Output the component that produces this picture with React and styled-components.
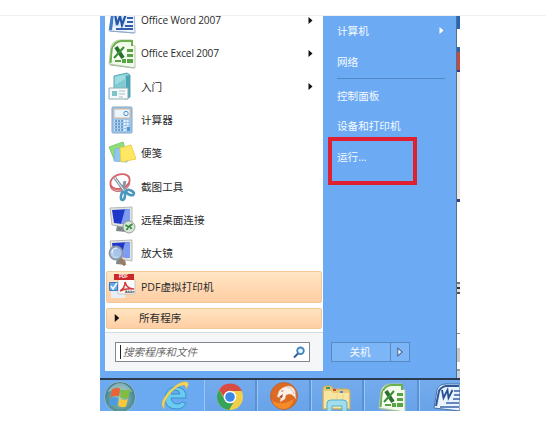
import React from 'react';
import styled, { createGlobalStyle } from 'styled-components';

const GlobalStyle = createGlobalStyle`
  * { box-sizing: border-box; }
  body { margin: 0; background: #fff; }
`;

const Page = styled.main`
  width: 546px;
  height: 425px;
  overflow: hidden;
  padding-top: 15px;
  font-family: 'Open Sans', 'Noto Sans CJK SC', sans-serif;
  font-size: 10.6px;
  color: #2a2a2a;
`;
const Desktop = styled.div`
  border-top: 1px solid #f0f0f0;
  padding-left: 100px;
`;
const Upper = styled.div`
  display: flex;
  width: 360px;
  height: 362px;
`;
const StartMenu = styled.section`
  display: flex;
  width: 357px;
  height: 362px;
  padding-left: 5px;
  background: #6cabf4;
`;
const Left = styled.div`
  width: 218px;
  height: 355px;
  background: #fff;
  display: flex;
  flex-direction: column;
`;
const Programs = styled.div`
  height: 287px;
  display: flex;
  flex-direction: column;
  justify-content: flex-end;
`;
const Program = styled.div`
  flex: none;
  display: flex;
  align-items: ${p => (p.$first ? 'flex-start' : 'center')};
  height: ${p => (p.$active ? 32 : p.$first ? 20.9 : 33.3)}px;
  margin: ${p => (p.$active ? 1 : 0)}px 0 0 1px;
  width: 216px;
  padding: 0 7px 0 1px;
  gap: 5px;
  border-radius: 2px;
  border: solid ${p => (p.$active ? '#f3c898' : 'transparent')};
  border-width: ${p => (p.$first ? 0 : 1)}px 1px 1px;
  background: ${p => (p.$active ? 'linear-gradient(#ffe6c4, #ffcda3)' : 'none')};
  svg { flex: none; }
`;
const Label = styled.span`
  flex: 1;
  line-height: ${p => (p.$latin ? 9 : 16)}px;
  white-space: nowrap;
  font-size: ${p => (p.$latin ? 10.1 : 10.6)}px;
  letter-spacing: ${p => (p.$latin ? -0.12 : 0)}px;
`;
const AllPrograms = styled.div`
  flex: none;
  display: flex;
  align-items: center;
  gap: 18px;
  height: 21px;
  margin: 5px 0 3px 1px;
  width: 216px;
  padding: 0 0 2px 6px;
  border: 1px solid #f3c898;
  border-radius: 2px;
  background: linear-gradient(#ffe4bf, #ffcea5);
`;
const SearchArea = styled.div`
  flex: 1;
  padding: 9px 13px 0 10px;
  border-top: 1px solid #d5dde5;
  background: #f4f6f8;
`;
const SearchBox = styled.div`
  display: flex;
  align-items: center;
  height: 20px;
  padding: 0 4px;
  border: 1px solid #7f8790;
  background: #fff;
  color: #6a6a6a;
  font-style: italic;
`;
const Caret = styled.i`
  width: 1px;
  height: 14px;
  margin-right: 2px;
  background: #222;
`;
const Right = styled.div`
  width: 134px;
  border-right: 1px solid #4f7195;
  padding: 0 11px 0 8px;
  display: flex;
  flex-direction: column;
  color: #f6faff;
`;
const Place = styled.div`
  position: relative;
  flex: none;
  display: flex;
  align-items: center;
  justify-content: space-between;
  height: 30.5px;
  padding: 0 0 1px 6px;
`;
const Rule = styled.div`
  height: 1px;
  margin: 1px 0 1.5px 6px;
  background: #5088ca;
`;
const Highlight = styled.div`
  position: absolute;
  left: -3px;
  top: -5px;
  width: 89px;
  height: 48px;
  border: 4px solid #df2030;
`;
const Shutdown = styled.div`
  display: grid;
  grid-template-columns: 58px 1fr;
  width: 79px;
  height: 20px;
  margin-top: auto;
  margin-bottom: 16px;
  border: 1px solid #5689c2;
  background: #7db6f6;
`;
const ShutdownPart = styled.div`
  display: flex;
  align-items: center;
  justify-content: center;
  padding: 0 ${p => (p.$split ? 0 : 2)}px 1px 0;
  border-left: ${p => (p.$split ? '1px solid #5689c2' : 'none')};
`;
const Backdrop = styled.div`
  width: 3px;
  display: flex;
  flex-direction: column;
`;
const Slice = styled.div`
  height: ${p => p.$h}px;
  background: ${p => p.$c};
`;
const Taskbar = styled.nav`
  display: flex;
  width: 360px;
  height: 33px;
  border-top: 2px solid #2c3b50;
  background: #6ba9f1;
  overflow: hidden;
`;
const Task = styled.div`
  flex: none;
  width: ${p => p.$w}px;
  padding: ${p => p.$top || 2}px 0 0 ${p => p.$pad}px;
  border-left: ${p => (p.$open ? '1px solid #98c6f8' : 'none')};
  border-right: ${p => (p.$open ? '2px solid #5a91d3' : 'none')};
  background: ${p => (p.$open ? 'linear-gradient(#73abed, #69a3e8)' : 'none')};
  svg { display: block; }
`;

const Arrow = ({ color = '#111', size = 7, outline = 'none' }) => (
  <svg width={size} height={size + 2} viewBox="0 0 7 9">
    <path d="M1.5 1 5.5 4.500 1.5 8Z" fill={color} stroke={outline} />
  </svg>
);

const WordIcon = () => (
  <svg width="28" height="19" viewBox="0 11 28 19">
    <path d="M1 26 4 6Q6 1 12 1h14l1 27Z" fill="#eef5ff" stroke="#9db5d6" />
    <path d="M2.500 25 5 7q1-4 6-5" fill="none" stroke="#3f78c4" strokeWidth="3" />
    <path d="M6 6h12v16H5Z" fill="#dbe8fa" />
    <path d="m7 9 2 11 3-9 2 9 4-11" fill="none" stroke="#2556a8" strokeWidth="2.200" />
    <path d="M19 13h6M19 17h6M17 21h8M8 24h17" stroke="#315fa9" strokeWidth="1.800" />
    <path d="m2 26 24 2" stroke="#93a6c4" />
  </svg>
);
const ExcelIcon = () => (
  <svg width="28" height="30" viewBox="0 0 28 30">
    <path d="M1 25 3 8Q5 1 13 1h11v5l3 1v22Z" fill="#f1f9ea" stroke="#b0cba5" />
    <path d="M2.500 24 4 10Q6 3 13 2h11v5" fill="none" stroke="#6bb04c" strokeWidth="2" />
    <path d="M5 8h13v13H4Z" fill="#fbfff8" />
    <path d="m8 8 7 11" stroke="#28702c" strokeWidth="4" />
    <path d="m16 8-10 11" stroke="#3c8f36" strokeWidth="2.200" />
    <path d="M19 10h6v3h-6Zm0 5h6v3h-6ZM14 20h4v4h-4Zm5 0h6v4h-6ZM7 21h6v2H7Z" fill="#5aa345" />
    <path d="m2 26 24 3" stroke="#a8b7a4" />
  </svg>
);
const StartedIcon = () => (
  <svg width="28" height="30" viewBox="0 0 28 30">
    <path d="m6 4 13-3 3 2v22l-4 2-12-4Z" fill="#8ccdd5" stroke="#5aa9b5" />
    <path d="m18 4 4-1v22l-4 2Z" fill="#4ba5b4" />
    <path d="m7 5 10-2v20H7Z" fill="#9edce2" />
    <path d="m7 13 10-6v16H7Z" fill="#63b7c4" opacity=".5" />
    <path d="M1 16h19v11H1Z" fill="#f5fbfc" stroke="#8daeb5" />
    <path d="M4 19h5v5H4Z" fill="#81c4c7" />
    <path d="M11 19h6M11 22h6M11 25h4" stroke="#a9bdc0" />
  </svg>
);
const CalcIcon = () => (
  <svg width="28" height="30" viewBox="0 0 28 30">
    <rect x="4" y="2" width="20" height="26" rx="1" fill="#9fc5e8" stroke="#82a9cd" />
    <path d="M6 4h16v9H6Z" fill="#e9f5ff" stroke="#dcb58f" />
    <circle cx="18" cy="8.500" r="2.200" fill="none" stroke="#4f8fc9" />
    <path d="M6.500 16h15M6.500 19h15M6.500 22h15M6.500 25h15" stroke="#e4f2fd" strokeWidth="2" strokeDasharray="2 1" />
    <path d="M7 16h8M7 19h8M7 22h8M7 25h8" stroke="#4b87c0" strokeWidth="1.500" strokeDasharray="2 1" />
    <path d="M19 22h3v4h-3Z" fill="#4f96d5" />
  </svg>
);
const NotesIcon = () => (
  <svg width="28" height="30" viewBox="0 0 28 30">
    <path d="m1 9 14-5 4 13-13 4Z" fill="#8edc7a" stroke="#7dcb70" />
    <path d="m7 11 13-2-1 15-13-1Z" fill="#91c6ef" stroke="#84b7dd" />
    <path d="m12 10 11-3 5 14-15 3Z" fill="#ffe663" stroke="#e9d252" />
  </svg>
);
const SnipIcon = () => (
  <svg width="28" height="30" viewBox="0 0 28 30">
    <ellipse cx="12" cy="12" rx="10" ry="7" fill="#e9b1b3" stroke="#c66a70" transform="rotate(-20 12 12)" />
    <ellipse cx="12" cy="9.500" rx="10" ry="7" fill="#fff" stroke="#d56169" strokeWidth="1.800" transform="rotate(-20 12 9.500)" />
    <path d="m7 6 11 15M17 9l-3 12" stroke="#8398a5" strokeWidth="3" />
    <path d="m7 6 10 14" stroke="#e8f0f4" />
    <ellipse cx="15" cy="24" rx="2" ry="4" fill="none" stroke="#4b97bd" strokeWidth="2.600" transform="rotate(10 15 24)" />
    <ellipse cx="22" cy="20.500" rx="4" ry="2.200" fill="none" stroke="#4b97bd" strokeWidth="2.600" transform="rotate(25 22 20.500)" />
  </svg>
);
const Monitor = ({ remote = false }) => (
  <svg width="28" height="30" viewBox="0 0 28 30">
    <path d="m9 20 8 1 1 6-10-1Z" fill="#7e8789" />
    <path d="m2 3 22-1v21L4 20Z" fill="#e2e6e5" stroke="#b4b9b7" />
    <path d="m4 5 18-1v16L6 18Z" fill="#2038c9" />
    <path d="m17 4.300 5-.3v16l-9-1Z" fill="#7f9cf0" />
    {remote ? (
      <g>
        <circle cx="21" cy="22" r="6" fill="#d8e5d8" stroke="#91a392" />
        <path d="m17.500 20 3 2-2 3M24.500 19l-3 2 2 3" fill="none" stroke="#328a39" strokeWidth="1.600" />
      </g>
    ) : (
      <g>
        <path d="m12 20 4 6" stroke="#a07a5a" strokeWidth="3.500" strokeLinecap="round" />
        <circle cx="8" cy="15" r="6.500" fill="#b6d3ed" fillOpacity=".9" stroke="#8997a6" strokeWidth="1.800" />
        <path d="M4 15q0-5 5-5" fill="none" stroke="#f0faff" />
      </g>
    )}
  </svg>
);
const PdfMark = styled.span`
  position: relative;
  display: block;
  width: 28px;
  height: 30px;
`;
const PdfText = styled.span`
  position: absolute;
  z-index: 1;
  left: ${p => p.$x}px;
  top: ${p => p.$y}px;
  font: bold ${p => p.$size}px/1 'Liberation Sans', sans-serif;
  color: ${p => p.$color};
`;
const PdfIcon = () => (
  <PdfMark>
    <svg width="28" height="30" viewBox="0 0 28 30">
      <path d="M3 17h14v9H3Z" fill="#e7eef6" />
      <path d="M10 4h13l4 4v14H10Z" fill="#fbfbfb" stroke="#c9c5c2" />
      <path d="M6 2h20v6H6Z" fill="#cc282b" />
      <path d="M12 19q5-3 5-9 2 7 9 7-8-1-14 2" fill="none" stroke="#d23c42" strokeWidth="1.500" />
      <path d="M1.500 10.500h8v8h-8Z" fill="#6aa6e3" stroke="#337bc4" />
      <path d="m3 14 2 3 4-6" fill="none" stroke="#eefaff" strokeWidth="1.800" />
    </svg>
    <PdfText $x={11} $y={3} $size={4.5} $color="#fff">PDF</PdfText>
    <PdfText $x={17} $y={19} $size={3} $color="#333">Adobe</PdfText>
  </PdfMark>
);
const SearchIcon = () => (
  <svg width="12" height="13" viewBox="0 0 12 13">
    <circle cx="7.500" cy="4.800" r="3.300" fill="#e5f5ff" stroke="#4084bd" strokeWidth="1.800" />
    <path d="m5 7.500-4 4" stroke="#355a9c" strokeWidth="2" />
  </svg>
);

const StartIcon = () => (
  <svg width="34" height="34" viewBox="0 0 34 34">
    <defs>
      <radialGradient id="orb" cy=".55">
        <stop stopColor="#a5d0bd" /><stop offset=".6" stopColor="#67a3a4" /><stop offset="1" stopColor="#467f92" />
      </radialGradient>
    </defs>
    <circle cx="16" cy="16" r="15.500" fill="url(#orb)" stroke="#8fbdcb" />
    <path d="M3 11Q9 2 16 2t13 9q-12-4-26 0" fill="#dbefe4" opacity=".4" />
    <path d="M8 8.500q4.500-3 8-1l-1 8q-4-2-8.500 1Z" fill="#ed6434" />
    <path d="M17.500 8q4.500 3 9 0l-2 8q-4.500 3-8.500 0Z" fill="#83bd3d" />
    <path d="M6 18q4-3 8.500-1L13 25q-4-2-8 0Z" fill="#4d9be0" />
    <path d="M15.800 17.500q4.200 3 8.200 0l-2 8q-4 2-8-1Z" fill="#f8c83b" />
  </svg>
);
const IEIcon = () => (
  <svg width="29" height="31" viewBox="0 0 29 31">
    <path d="M25 17H10q1 6 6 6 4 0 5-2l4 1q-3 6-9 6Q4 28 4 17 5 6 15 6q11 1 10 11Z" fill="#6dcbf0" stroke="#3495cb" />
    <path d="M10 13h9q-1-4-5-4-3 0-4 4Z" fill="#6aacf4" stroke="#338fc5" />
    <path d="M4 28Q-3 24 6 13 18-1 26 1q3 2-1 7 0-4-2-4Q16 4 8 14 1 23 4 28Z" fill="#f4d95f" stroke="#d8b63d" strokeWidth=".6" />
  </svg>
);
const ChromeIcon = () => (
  <svg width="28" height="28" viewBox="0 0 28 28">
    <circle cx="14" cy="14" r="13" fill="#f2cf48" />
    <path d="M3 7A13 13 0 0 1 26 8H14a6 6 0 0 0-6 6Z" fill="#d84c43" />
    <path d="M3 7a13 13 0 0 0 10 20l6-10a6 6 0 0 1-10 0Z" fill="#35a35a" />
    <circle cx="14" cy="14" r="6.300" fill="#fff" /><circle cx="14" cy="14" r="4.800" fill="#3987e7" />
  </svg>
);
const CheetahIcon = () => (
  <svg width="29" height="29" viewBox="0 0 29 29">
    <circle cx="14" cy="14" r="13.500" fill="#dd6a22" stroke="#b9683b" />
    <path d="M2 18q8 7 22-1-3 10-11 10Q4 26 2 18Z" fill="#f58a29" />
    <path d="m7 15 2-6q3-4 9-5 5 0 7 5l1 8q-3-5-7-5l-3 1-1 4-5 3 1-4-3-1Z" fill="#fbf1e8" stroke="#d7b69c" strokeWidth=".5" />
    <path d="m11 9 3-1-2 2Z" fill="#a66335" />
    <path d="M17 5q5 1 7 7" fill="none" stroke="#cfae97" strokeWidth=".7" />
    <path d="m9 15 4-3-1 4Z" fill="#9f3d1f" />
  </svg>
);
const FolderIcon = () => (
  <svg width="29" height="30" viewBox="0 0 29 30">
    <path d="M1 24V4q0-3 3-3h5l2 3h14q3 0 3 3v17Z" fill="#e8c979" stroke="#d0ac5b" />
    <path d="M2 23V6h7l2 2h16v15Z" fill="#f8e6a0" />
    <path d="M4 2h4v2H4Z" fill="#389d54" /><path d="M11 4h3v2h-3Z" fill="#c64d31" /><path d="M18 6h3v2h-3Z" fill="#4c91be" />
    <path d="M15 9v12M21 9v12" stroke="#ead58c" />
    <path d="M5 27V18q0-3 4-3h12q4 0 4 3v9h-5v-6H10v6Z" fill="#9cdcf0" fillOpacity=".95" stroke="#55aed3" />
  </svg>
);
const TaskWord = () => (
  <svg width="28" height="29" viewBox="0 0 28 29">
    <path d="M1 25 4 7Q6 1 13 1h14v27L1 25Z" fill="#e9f2ff" stroke="#4771a6" />
    <path d="M3 23 6 8q2-4 7-5h13" fill="none" stroke="#2c5798" strokeWidth="2" />
    <path d="m9 7 1.500 8 4-8 1 8 4-8" fill="none" stroke="#244e93" strokeWidth="1.800" />
    <path d="M21 8h6M21 12h6M20 16h7M13 20h13M7 24h19" stroke="#3a63a5" strokeWidth="1.700" />
  </svg>
);

const programs = [
  ['Office Word 2007', WordIcon, true],
  ['Office Excel 2007', ExcelIcon, true],
  ['入门', StartedIcon, true],
  ['计算器', CalcIcon],
  ['便笺', NotesIcon],
  ['截图工具', SnipIcon],
  ['远程桌面连接', () => <Monitor remote />],
  ['放大镜', Monitor],
  ['PDF虚拟打印机', PdfIcon],
];
const background = [
  [13, '#2866b5'], [18, '#fff'], [5, '#2d65ad'], [18, '#c44b3d'], [2, '#353a96'],
  [127, '#f0eae2'], [3, '#33418e'], [80, '#fff'], [2, '#777'], [3, '#ddd'],
  [2, '#333'], [3, '#ddd'], [2, '#555'], [2, '#fff'], [37, '#fff'], [1, '#888'],
  [14, '#fff'], [14, '#c8c8c8'], [7, '#fff'], [2, '#999'], [7, '#c8d5e1'],
];

export default function App() {
  return (
    <Page>
      <GlobalStyle />
      <Desktop>
        <Upper>
          <StartMenu>
            <Left>
              <Programs>
                {programs.map(([name, Icon, more], i) => (
                  <Program key={name} $first={i === 0} $active={name.startsWith('PDF')}>
                    <Icon />
                    <Label $latin={name.startsWith('Office')}>{name}</Label>
                    {more && <Arrow />}
                  </Program>
                ))}
              </Programs>
              <AllPrograms><Arrow size={8} />所有程序</AllPrograms>
              <SearchArea>
                <SearchBox><Caret /><Label>搜索程序和文件</Label><SearchIcon /></SearchBox>
              </SearchArea>
            </Left>
            <Right>
              <Place>计算机<Arrow color="#fff" /></Place>
              <Place>网络</Place>
              <Rule />
              <Place>控制面板</Place>
              <Place>设备和打印机</Place>
              <Place>运行...<Highlight /></Place>
              <Shutdown>
                <ShutdownPart>关机</ShutdownPart>
                <ShutdownPart $split><Arrow color="#fff" outline="#426a9c" size={8} /></ShutdownPart>
              </Shutdown>
            </Right>
          </StartMenu>
          <Backdrop>{background.map(([h, c], i) => <Slice key={i} $h={h} $c={c} />)}</Backdrop>
        </Upper>
        <Taskbar>
          <Task $w={49} $pad={4} $top={1}><StartIcon /></Task>
          <Task $w={55} $pad={12} $top={1}><IEIcon /></Task>
          <Task $w={53} $pad={11} $top={3} $open><ChromeIcon /></Task>
          <Task $w={54} $pad={12} $open><CheetahIcon /></Task>
          <Task $w={53} $pad={10} $top={5} $open><FolderIcon /></Task>
          <Task $w={55} $pad={13} $top={3} $open><ExcelIcon /></Task>
          <Task $w={55} $pad={13} $top={3} $open><TaskWord /></Task>
        </Taskbar>
      </Desktop>
    </Page>
  );
}
